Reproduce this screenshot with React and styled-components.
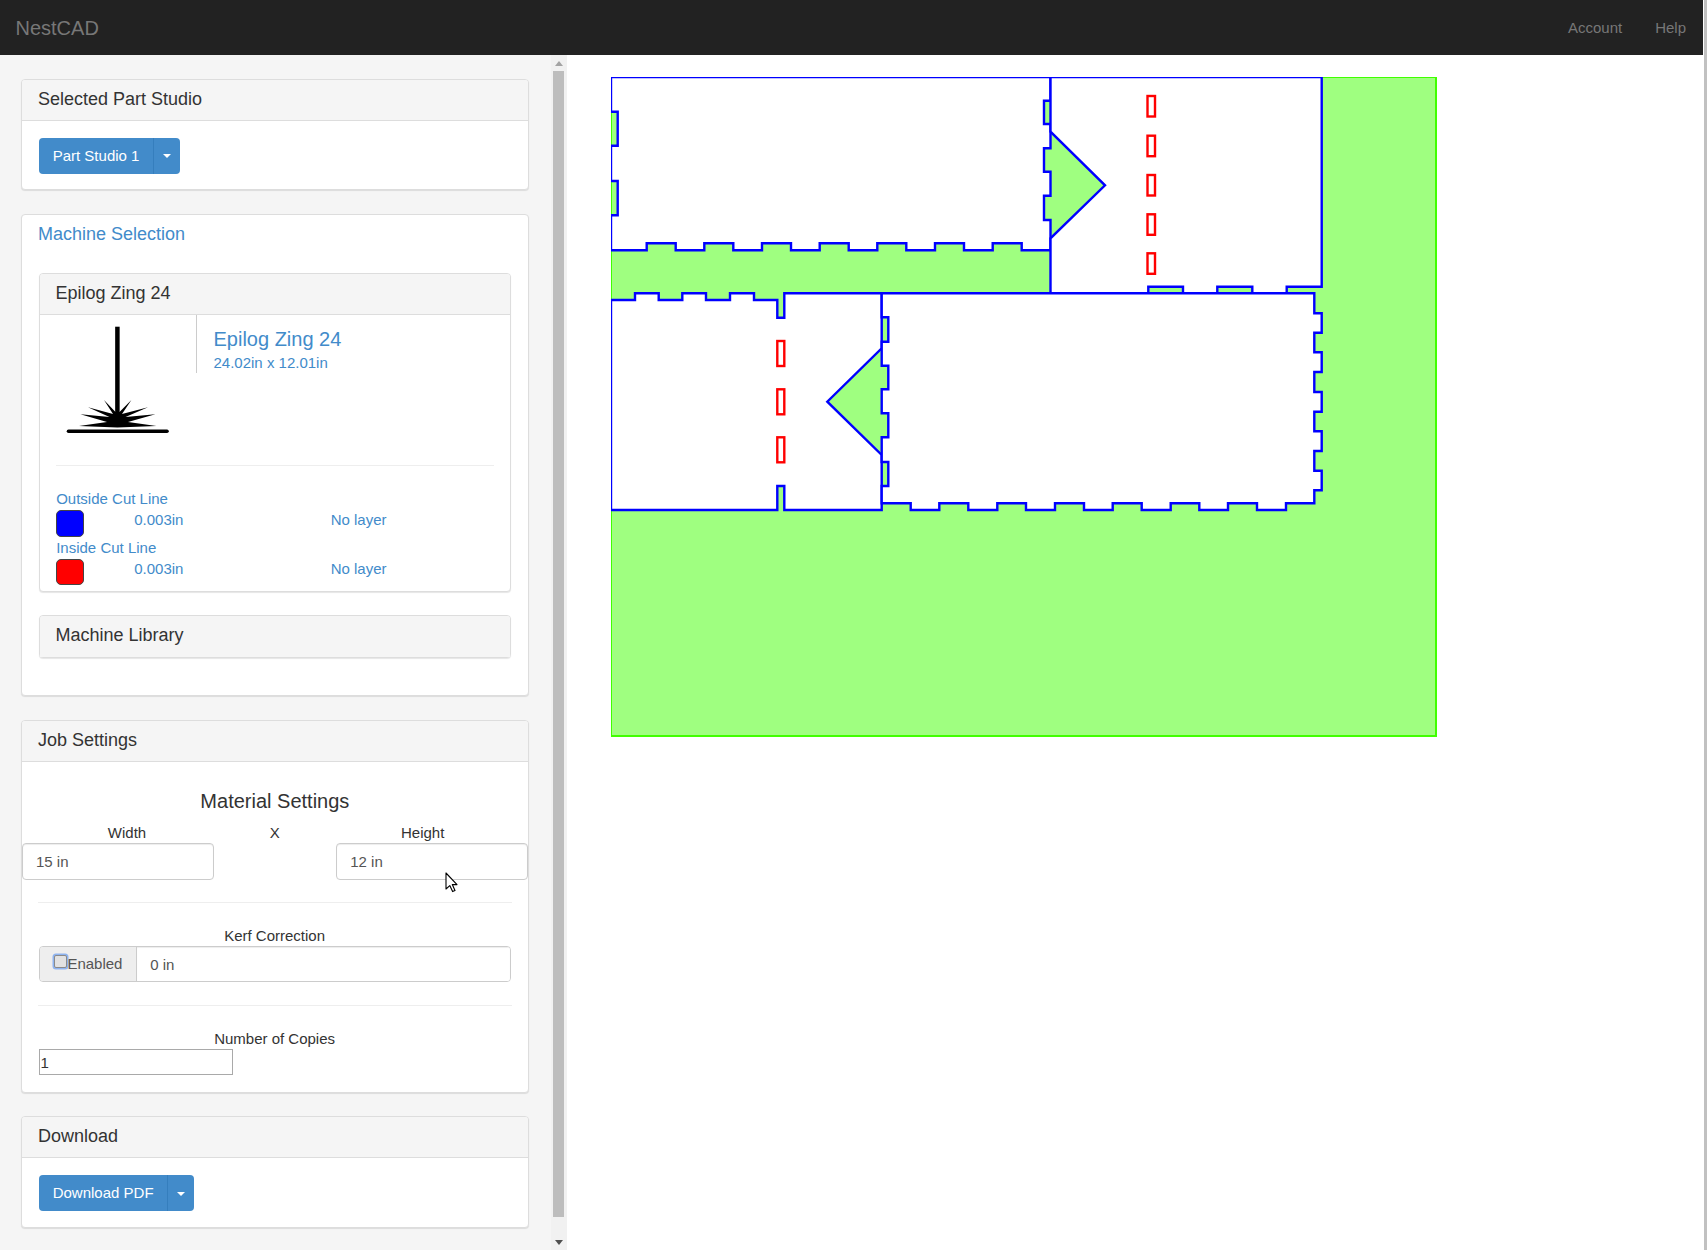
import styled, { createGlobalStyle } from "styled-components";

const GlobalStyle = createGlobalStyle`
  html, body {
    margin: 0;
    height: 100%;
    overflow: hidden;
    background: #fff;
  }
  body {
    font-family: "Liberation Sans", Arial, sans-serif;
    font-size: 15px;
    line-height: 20px;
    color: #333;
  }
  * {
    box-sizing: border-box;
  }
`;

const Page = styled.div`
  display: flex;
  width: 1707px;
  height: 1250px;
  overflow: hidden;
`;

const Content = styled.div`
  width: 1703px;
  display: flex;
  flex-direction: column;
`;

const PageScrollbar = styled.div`
  width: 3px;
  margin-left: 1px;
  background: #c1c1c1;
`;

const NavBar = styled.nav`
  height: 55px;
  flex: none;
  padding: 0 17px 0 15.5px;
  background: #222;
  color: #777;
  display: flex;
  align-items: center;
  justify-content: space-between;
`;

const Brand = styled.span`
  font-size: 20px;
`;

const NavItems = styled.div`
  display: flex;
  gap: 33px;
`;

const Main = styled.div`
  flex: 1;
  display: flex;
  min-height: 0;
`;

const Sidebar = styled.aside`
  width: 551px;
  flex: none;
  padding: 23.5px 22.3px 0 21px;
  background: #f5f5f5;
  overflow: hidden;
`;

const ScrollTrack = styled.div`
  width: 16px;
  flex: none;
  background: #f1f1f1;
  display: flex;
  flex-direction: column;
  align-items: center;
`;

const ScrollArrow = styled.div`
  flex: none;
  height: ${(p) => (p.$down ? "33px" : "15.7px")};
  padding-top: ${(p) => (p.$down ? "23px" : "6px")};
  &::after {
    content: "";
    display: block;
    width: 0;
    height: 0;
    border-left: 4.5px solid transparent;
    border-right: 4.5px solid transparent;
    ${(p) =>
      p.$down
        ? "border-top: 5px solid #505050;"
        : "border-bottom: 5px solid #a3a3a3;"}
  }
`;

const ScrollThumb = styled.div`
  flex: 1;
  width: 11px;
  align-self: flex-start;
  margin-left: 2px;
  background: #bdbdbd;
`;

const Panel = styled.section`
  background: #fff;
  border: 1px solid #ddd;
  border-radius: 4px;
  box-shadow: 0 1px 1px rgba(0, 0, 0, 0.1);
  margin-bottom: ${(p) => p.$mb || "23.4px"};
`;

const PanelHeading = styled.div`
  height: 41px;
  padding: 0 16px;
  background: #f5f5f5;
  border-bottom: ${(p) => (p.$flat ? "none" : "1px solid #ddd")};
  border-radius: 3px 3px 0 0;
  font-size: 18px;
  line-height: 39px;
  color: #333;
`;

const ButtonBody = styled.div`
  padding: 17.3px 16px 15.6px 16.7px;
`;

const SplitButton = styled.div`
  display: inline-flex;
  height: 36px;
  background: #428bca;
  border-radius: 4px;
  color: #fff;
`;

const ButtonLabel = styled.span`
  padding: 0 13.3px 0 14px;
  line-height: 36px;
  border-right: 1px solid #357ebd;
`;

const CaretBox = styled.span`
  width: 26.2px;
  display: flex;
  align-items: center;
  justify-content: center;
  &::after {
    content: "";
    width: 0;
    height: 0;
    margin-top: 1px;
    border-left: 4.3px solid transparent;
    border-right: 4.3px solid transparent;
    border-top: 4.3px solid #fff;
  }
`;

const MachineTitle = styled.div`
  height: 58.6px;
  padding: 9px 16px 0;
  font-size: 18px;
  color: #428bca;
`;

const MachineBody = styled.div`
  padding: 0 17px 37px 16.5px;
`;

const MediaRow = styled.div`
  display: flex;
  height: 149.6px;
  align-items: flex-start;
`;

const MachineIcon = styled.svg`
  width: 156px;
  height: 125px;
  flex: none;
  display: block;
`;

const MediaText = styled.div`
  height: 58px;
  padding: 13px 0 0 17px;
  border-left: 1px solid #ccc;
  color: #428bca;
`;

const MediaTitle = styled.div`
  font-size: 20px;
  line-height: 22px;
  margin-bottom: 3px;
`;

const Rule = styled.hr`
  height: 1px;
  margin: ${(p) => p.$margin || "0 16px"};
  border: none;
  background: #eee;
`;

const Layers = styled.div`
  padding: 23px 16px 6.7px 16.7px;
  color: #428bca;
`;

const LayerRow = styled.div`
  display: grid;
  grid-template-columns: 78px 196.5px 1fr;
  height: ${(p) => p.$h || "29px"};
`;

const Swatch = styled.div`
  width: 27.4px;
  height: ${(p) => p.$h || "27.3px"};
  margin-top: 0.7px;
  border: 1px solid #444;
  border-radius: 5px;
  background: ${(p) => p.$color};
`;

const LayerValue = styled.span`
  padding-top: 1px;
`;

const SettingsBody = styled.div`
  padding: 27.4px 0 16.3px;
`;

const CenterHeading = styled.div`
  font-size: 20px;
  line-height: 24px;
  text-align: center;
  margin-bottom: 10px;
`;

const LabelRow = styled.div`
  display: grid;
  grid-template-columns: 177px 1fr 177px;
  padding: 0 16.5px;
  text-align: center;
`;

const InputRow = styled.div`
  display: grid;
  grid-template-columns: 191.5px 1fr 191.5px;
  margin-bottom: 22px;
`;

const TextField = styled.input`
  display: block;
  width: 100%;
  height: 36.8px;
  padding: 0 13px;
  border: 1px solid #ccc;
  border-radius: 4px;
  background: #fff;
  box-shadow: inset 0 1px 1px rgba(0, 0, 0, 0.075);
  font: inherit;
  color: #555;
  outline: none;
`;

const FieldLabel = styled.div`
  text-align: center;
`;

const FieldBlock = styled.div`
  padding: 0 17px 0 16.5px;
  margin: ${(p) => p.$margin || "0"};
`;

const InputGroup = styled.div`
  display: flex;
  height: 36.8px;
  border: 1px solid #ccc;
  border-radius: 4px;
  overflow: hidden;
`;

const Addon = styled.label`
  width: 97.7px;
  flex: none;
  display: flex;
  align-items: center;
  padding: 1px 0 0 14px;
  background: #eee;
  border-right: 1px solid #ccc;
  color: #555;
`;

const CheckBox = styled.input`
  appearance: none;
  width: 13px;
  height: 13px;
  margin: -5px 0.9px 0 0;
  flex: none;
  background: #e2e2e2;
  border: 1px solid #8a8a8a;
  border-radius: 2px;
  box-shadow: 0 0 0 1.5px #8fb4f0;
`;

const GroupField = styled(TextField)`
  flex: 1;
  height: 100%;
  width: auto;
  padding: 1px 0 0 13px;
  border: none;
  border-radius: 0;
`;

const CopiesField = styled.input`
  display: block;
  width: 194px;
  height: 26.4px;
  padding: 0 0 0 1px;
  border: 1.5px solid #a9a9a9;
  background: #fff;
  font: inherit;
  color: #333;
  outline: none;
`;

const Cursor = styled.svg`
  position: absolute;
  left: 445px;
  top: 872px;
  width: 13px;
  height: 21px;
`;

const Canvas = styled.main`
  flex: 1;
  padding: 22px 0 0 44px;
  background: #fff;
`;

const Sheet = styled.svg`
  display: block;
  width: 826px;
  height: 660px;
`;

const panelA =
  "611,77 1050.5,77 1050.5,100.7 1044,100.7 1044,124 1050.5,124 1050.5,148.3 1044,148.3 1044,171.7 1050.5,171.7 1050.5,195.7 1044,195.7 1044,220 1050.5,220 1050.5,250.3 1021.7,250.3 1021.7,243.3 992.7,243.3 992.7,250.3 964,250.3 964,243.3 935,243.3 935,250.3 906.3,250.3 906.3,243.3 877.3,243.3 877.3,250.3 848.7,250.3 848.7,243.3 819.7,243.3 819.7,250.3 791,250.3 791,243.3 762,243.3 762,250.3 733.3,250.3 733.3,243.3 704.3,243.3 704.3,250.3 675.7,250.3 675.7,243.3 646.7,243.3 646.7,250.3 611,250.3 611,215.3 617.7,215.3 617.7,181 611,181 611,145.7 617.7,145.7 617.7,111.7 611,111.7";

const panelB =
  "1050.5,77 1321.7,77 1321.7,286.7 1286.7,286.7 1286.7,293.3 1252.3,293.3 1252.3,286.7 1217.3,286.7 1217.3,293.3 1183,293.3 1183,286.7 1148.3,286.7 1148.3,293.3 1050.5,293.3 1050.5,238.3 1105,185.3 1050.5,131.7";

const panelC =
  "611,300 635,300 635,293.3 658.7,293.3 658.7,300 682.3,300 682.3,293.3 706,293.3 706,300 730,300 730,293.3 754,293.3 754,300 777.3,300 777.3,317.7 784.3,317.7 784.3,293.3 881.7,293.3 881.7,348.3 827.3,401.7 881.7,455 881.7,510 784.3,510 784.3,486 777.3,486 777.3,510 611,510";

const panelD =
  "881.7,293.3 1314.3,293.3 1314.3,313.3 1321.7,313.3 1321.7,332.7 1314.3,332.7 1314.3,352.3 1321.7,352.3 1321.7,372 1314.3,372 1314.3,392 1321.7,392 1321.7,411.7 1314.3,411.7 1314.3,431.3 1321.7,431.3 1321.7,451 1314.3,451 1314.3,470.7 1321.7,470.7 1321.7,490.3 1314.3,490.3 1314.3,503.3 1286,503.3 1286,510 1257,510 1257,503.3 1228,503.3 1228,510 1199.3,510 1199.3,503.3 1170.7,503.3 1170.7,510 1141.7,510 1141.7,503.3 1112.7,503.3 1112.7,510 1084,510 1084,503.3 1055,503.3 1055,510 1026,510 1026,503.3 997.3,503.3 997.3,510 968.3,510 968.3,503.3 939.3,503.3 939.3,510 910.7,510 910.7,503.3 881.7,503.3 881.7,486 888.3,486 888.3,462 881.7,462 881.7,437.3 888.3,437.3 888.3,413.3 881.7,413.3 881.7,389.3 888.3,389.3 888.3,365.7 881.7,365.7 881.7,341.7 888.3,341.7 888.3,317.3 881.7,317.3";

const slots = [
  [1147.5, 96, 7.5, 20.5],
  [1147.5, 135.7, 7.5, 20.5],
  [1147.5, 175, 7.5, 20.5],
  [1147.5, 214.3, 7.5, 20.5],
  [1147.5, 253.3, 7.5, 20.5],
  [777.3, 341, 7, 25],
  [777.3, 389.3, 7, 25],
  [777.3, 437.3, 7, 25],
];

function SplitBtn({ children }) {
  return (
    <SplitButton>
      <ButtonLabel>{children}</ButtonLabel>
      <CaretBox />
    </SplitButton>
  );
}

export default function App() {
  return (
    <Page>
      <GlobalStyle />
      <Content>
        <NavBar>
          <Brand>NestCAD</Brand>
          <NavItems>
            <span>Account</span>
            <span>Help</span>
          </NavItems>
        </NavBar>
        <Main>
          <Sidebar>
            <Panel>
              <PanelHeading>Selected Part Studio</PanelHeading>
              <ButtonBody>
                <SplitBtn>Part Studio 1</SplitBtn>
              </ButtonBody>
            </Panel>

            <Panel>
              <MachineTitle>Machine Selection</MachineTitle>
              <MachineBody>
                <Panel>
                  <PanelHeading>Epilog Zing 24</PanelHeading>
                  <MediaRow>
                    <MachineIcon viewBox="0 0 156 125">
                      <line x1="77.4" y1="11.7" x2="77.4" y2="110" stroke="#000" strokeWidth="4.5" />
                      <polygon
                        fill="#000"
                        points="39,111 67,107 40.4,99.3 69.5,102 48,92.3 73,99 64,85 75.5,97 79.5,97 91.4,85 82,99 108,92.3 85.5,102 115.4,99.3 88,107 116.4,111 77.4,112.5"
                      />
                      <line x1="28.5" y1="116.3" x2="127" y2="116.3" stroke="#000" strokeWidth="3.6" strokeLinecap="round" />
                    </MachineIcon>
                    <MediaText>
                      <MediaTitle>Epilog Zing 24</MediaTitle>
                      <div>24.02in x 12.01in</div>
                    </MediaText>
                  </MediaRow>
                  <Rule />
                  <Layers>
                    <div>Outside Cut Line</div>
                    <LayerRow>
                      <Swatch $color="#0000ff" />
                      <LayerValue>0.003in</LayerValue>
                      <LayerValue>No layer</LayerValue>
                    </LayerRow>
                    <div>Inside Cut Line</div>
                    <LayerRow $h="26.3px">
                      <Swatch $color="#ff0000" $h="26.3px" />
                      <LayerValue>0.003in</LayerValue>
                      <LayerValue>No layer</LayerValue>
                    </LayerRow>
                  </Layers>
                </Panel>
                <Panel $mb="0">
                  <PanelHeading $flat>Machine Library</PanelHeading>
                </Panel>
              </MachineBody>
            </Panel>

            <Panel>
              <PanelHeading>Job Settings</PanelHeading>
              <SettingsBody>
                <CenterHeading>Material Settings</CenterHeading>
                <LabelRow>
                  <span>Width</span>
                  <span>X</span>
                  <span>Height</span>
                </LabelRow>
                <InputRow>
                  <TextField readOnly value="15 in" />
                  <span />
                  <TextField readOnly value="12 in" />
                </InputRow>
                <Rule />
                <FieldBlock $margin="22.6px 0 22.6px">
                  <FieldLabel>Kerf Correction</FieldLabel>
                  <InputGroup>
                    <Addon>
                      <CheckBox type="checkbox" />
                      Enabled
                    </Addon>
                    <GroupField readOnly value="0 in" />
                  </InputGroup>
                </FieldBlock>
                <Rule />
                <FieldBlock $margin="23px 0 0">
                  <FieldLabel>Number of Copies</FieldLabel>
                  <CopiesField readOnly value="1" />
                </FieldBlock>
              </SettingsBody>
            </Panel>

            <Panel $mb="0">
              <PanelHeading>Download</PanelHeading>
              <ButtonBody>
                <SplitBtn>Download PDF</SplitBtn>
              </ButtonBody>
            </Panel>
          </Sidebar>

          <ScrollTrack>
            <ScrollArrow />
            <ScrollThumb />
            <ScrollArrow $down />
          </ScrollTrack>

          <Canvas>
            <Sheet viewBox="611 77 826 660">
              <rect x="611" y="77" width="825" height="659" fill="#9fff80" stroke="#40ff00" strokeWidth="2" />
              <g fill="#fff" stroke="#0000ff" strokeWidth="2.4">
                <polygon points={panelA} />
                <polygon points={panelB} />
                <polygon points={panelC} />
                <polygon points={panelD} />
              </g>
              <g fill="none" stroke="#ff0000" strokeWidth="2.4">
                {slots.map(([x, y, w, h]) => (
                  <rect key={`${x}-${y}`} x={x} y={y} width={w} height={h} />
                ))}
              </g>
            </Sheet>
          </Canvas>
        </Main>
      </Content>
      <PageScrollbar />
      <Cursor viewBox="0 0 13 21">
        <path d="M1 1 L1 17 L4.8 13.6 L7.6 19.6 L10 18.6 L7.3 12.6 L12 12.6 Z" fill="#fff" stroke="#000" strokeWidth="1.1" strokeLinejoin="round" />
      </Cursor>
    </Page>
  );
}
